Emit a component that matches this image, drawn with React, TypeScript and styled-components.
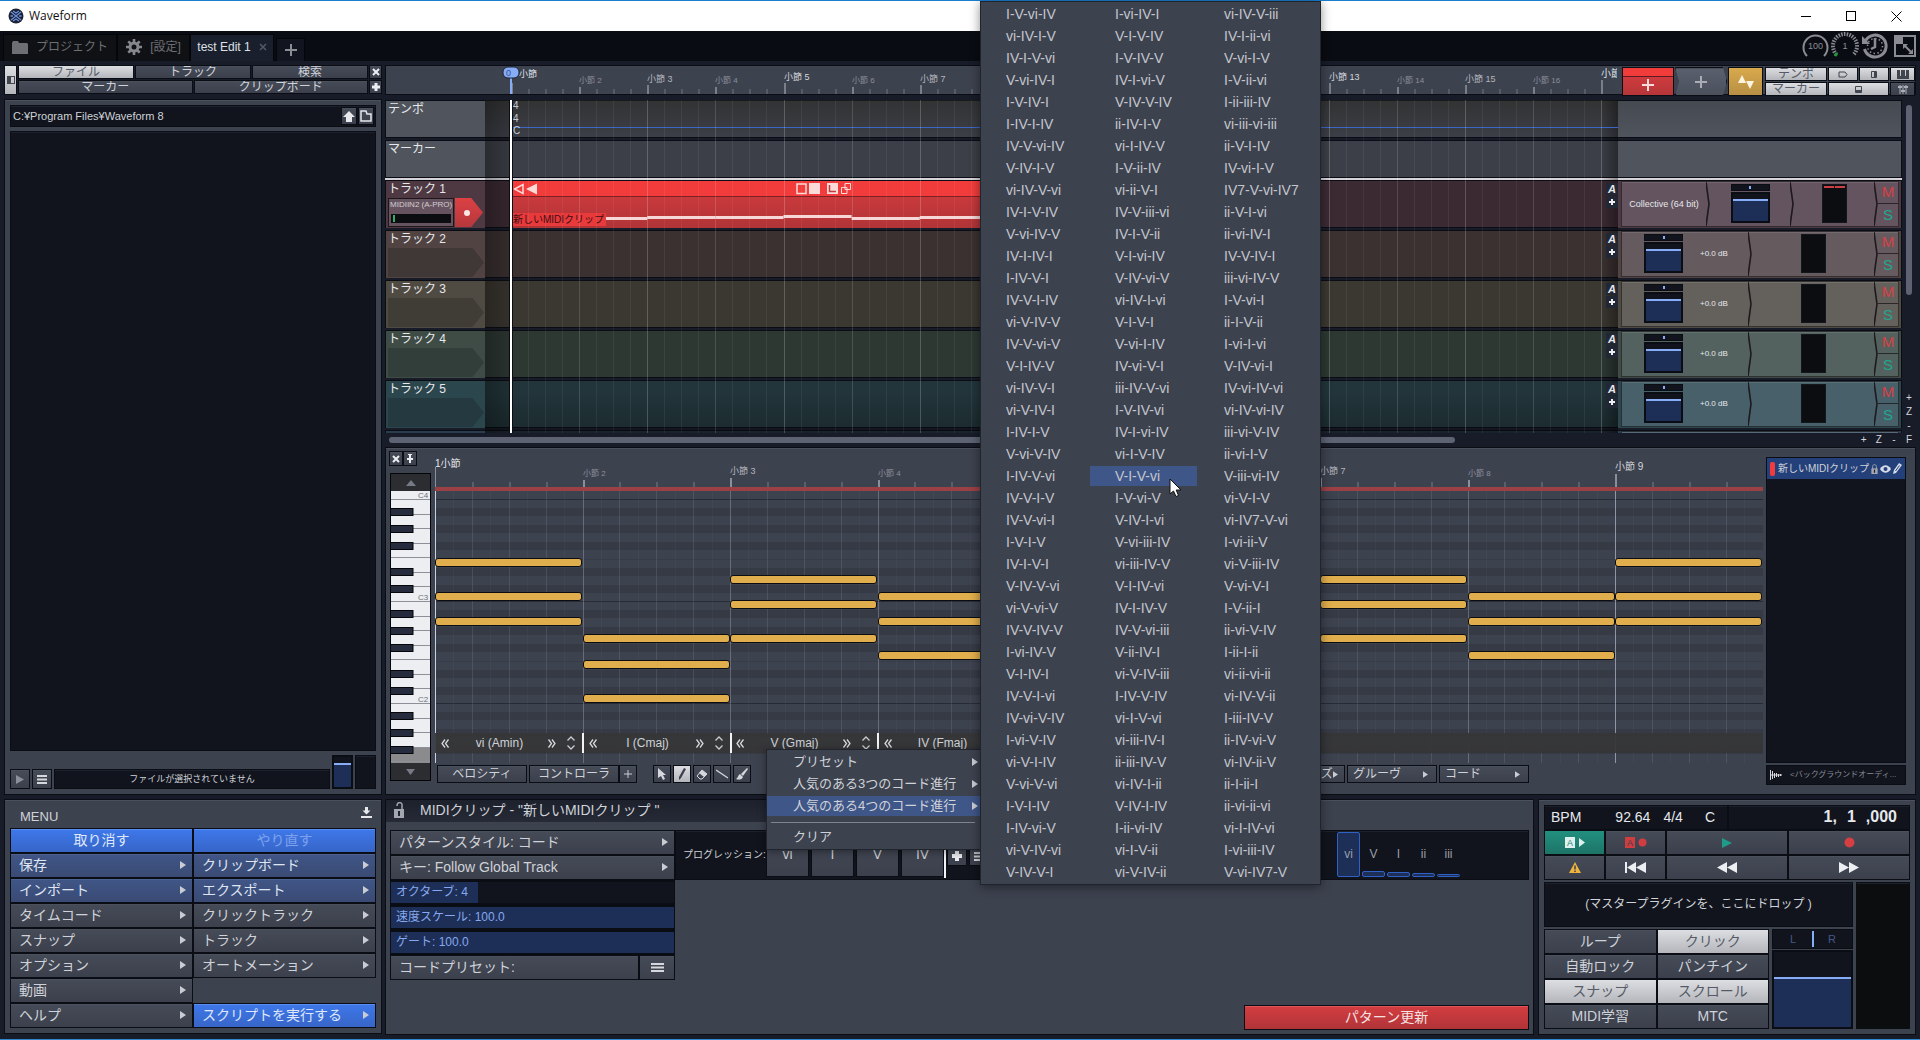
import React from "react";
import styled, { createGlobalStyle, css } from "styled-components";

/* ---------- tokens ---------- */
const c = {
  navy: "#181c28",
  black: "#0a0c13",
  well: "#11141c",
  panel: "#3d424f",
  line: "#0b0d14",
  hi: "#4b505d",
  text: "#cfd2d8",
  bright: "#e6e8ec",
  dim: "#868a95",
  blue: "#3c72e0",
  fill: "#1d2f57",
  level: "#87adf7",
  red: "#f23c3c",
  amber: "#e0ae4c",
};

const GlobalStyle = createGlobalStyle`
  *, *::before, *::after { box-sizing: border-box; }
  html, body, #root { height: 100%; }
  body {
    margin: 0;
    overflow: hidden;
    background: ${c.navy};
    color: ${c.text};
    font: 12px/16px "Liberation Sans", "Noto Sans CJK JP", sans-serif;
  }
  button, input { font: inherit; color: inherit; margin: 0; }
  button { border: 0; background: none; padding: 0; cursor: default; white-space: nowrap; }
  svg { display: block; flex: none; }
`;

/* ---------- shared parts ---------- */
const raised = css`
  border: 1px solid ${c.line};
  background: linear-gradient(#464b58, #3b404c);
  box-shadow: inset 0 1px 0 ${c.hi};
`;

const Panel = styled.section`
  background: ${c.panel};
  border: 1px solid ${c.line};
  box-shadow: inset 0 1px 0 ${c.hi};
  min-width: 0;
`;

const Well = styled.div`
  background: ${c.well};
  border: 1px solid ${c.line};
  box-shadow: inset 0 1px 0 #1c202a;
`;

type Tone = "plain" | "light" | "blue" | "steel" | "red" | "green";
const tones: Record<Tone, ReturnType<typeof css>> = {
  plain: css``,
  light: css`
    background: linear-gradient(#dcdee2, #b4b6bb);
    box-shadow: none;
    color: #555a66;
  `,
  blue: css`
    background: linear-gradient(#3e78ea, #3765c8);
    box-shadow: inset 0 1px 0 #5b8cf0;
    color: #dfe8fb;
  `,
  steel: css`
    background: linear-gradient(#405687, #3a4a74);
    box-shadow: inset 0 1px 0 #4d6293;
    color: #dfe5f2;
  `,
  red: css`
    background: linear-gradient(#d43d41, #b03438);
    box-shadow: inset 0 1px 0 #dd5558;
    color: #f4e2e2;
  `,
  green: css`
    background: linear-gradient(#22907f, #1d7467);
    box-shadow: none;
    color: #e2f2ef;
  `,
};

const Button = styled.button<{ $tone?: Tone; $size?: number; $left?: boolean }>`
  ${raised}
  display: flex;
  align-items: center;
  justify-content: ${(p) => (p.$left ? "space-between" : "center")};
  padding: ${(p) => (p.$left ? "0 6px 0 8px" : "0")};
  padding-bottom: ${(p) => (p.$size === 14 ? 2 : 0)}px;
  font-size: ${(p) => p.$size ?? 12}px;
  line-height: 1;
  color: ${c.text};
  overflow: hidden;
  min-width: 0;
  ${(p) => tones[p.$tone ?? "plain"]}
`;

const Arrow = ({ size = 8 }: { size?: number }) => (
  <svg width={size - 2} height={size} viewBox="0 0 6 8">
    <path d="M0 0L6 4L0 8Z" fill="#c9ccd3" />
  </svg>
);
const Bars = ({ w = 10 }: { w?: number }) => (
  <svg width={w} height="9" viewBox="0 0 10 9" preserveAspectRatio="none">
    <path d="M0 1H10M0 4.5H10M0 8H10" stroke="#d5d7dc" strokeWidth="1.8" />
  </svg>
);
const Cross = () => (
  <svg width="8" height="8" viewBox="0 0 8 8">
    <path d="M1 1L7 7M7 1L1 7" stroke="#eceef2" strokeWidth="2" />
  </svg>
);
const Plus = ({ size = 8, thick = 3, color = "#eceef2" }: { size?: number; thick?: number; color?: string }) => (
  <svg width={size} height={size} viewBox={`0 0 ${size} ${size}`}>
    <path d={`M0 ${size / 2}H${size}M${size / 2} 0V${size}`} stroke={color} strokeWidth={thick} />
  </svg>
);

/* ---------- window chrome ---------- */
const Window = styled.div`
  height: 100vh;
  display: flex;
  flex-direction: column;
  border-bottom: 1px solid #2f87d0;
  position: relative;
`;
const TitleBar = styled.header`
  height: 31px;
  flex: none;
  display: flex;
  align-items: center;
  gap: 5px;
  padding: 0 18px 0 8px;
  background: #fff;
  border-top: 1px solid #1b7fd0;
  color: #111;
  font: 12px/16px "Open Sans", sans-serif;
`;
const WindowButtons = styled.div`
  margin-left: auto;
  display: flex;
  gap: 34px;
`;
const TabBar = styled.nav`
  height: 30px;
  flex: none;
  display: flex;
  align-items: flex-end;
  padding: 0 3px;
  background: ${c.black};
`;
const Tab = styled.button<{ $active?: boolean; $w: number }>`
  width: ${(p) => p.$w}px;
  height: 27px;
  display: flex;
  align-items: center;
  justify-content: center;
  gap: 8px;
  padding-bottom: 2px;
  border: 1px solid #050609;
  border-bottom: 0;
  background: ${(p) => (p.$active ? "#1a1f2d" : "#101114")};
  color: ${(p) => (p.$active ? "#dfe1e6" : "#6d6f74")};
  line-height: 1;
`;
const AddTab = styled(Tab)`
  height: 23px;
  margin-left: 2px;
  padding: 0;
  background: #12151f;
`;
const TabTools = styled.div`
  margin-left: auto;
  align-self: center;
  display: flex;
  align-items: center;
  gap: 2px;
`;
const Main = styled.main`
  flex: 1;
  min-height: 0;
  display: grid;
  grid-template-columns: 378px minmax(0, 1fr);
  gap: 3px;
  padding: 4px 4px 5px;
`;
const Column = styled.div`
  display: flex;
  flex-direction: column;
  gap: 4px;
  min-width: 0;
  min-height: 0;
`;

/* ---------- browser ---------- */
const BrowserTabs = styled.div`
  flex: none;
  height: 30px;
  display: grid;
  grid-template-columns: 13px 1fr 13px;
  gap: 1px;
  & > div {
    display: grid;
    grid-template-rows: 14px 14px;
    gap: 1px;
  }
`;
const TabRow = styled.div`
  display: grid;
  grid-auto-flow: column;
  grid-auto-columns: 1fr;
  gap: 1px;
`;
const Browser = styled(Panel)`
  flex: 1;
  min-height: 0;
  display: flex;
  flex-direction: column;
  gap: 4px;
  padding: 5px;
`;
const PathBar = styled(Well)`
  height: 22px;
  flex: none;
  display: flex;
  align-items: center;
  gap: 1px;
  padding-right: 1px;
  button {
    width: 16px;
    height: 18px;
  }
`;
const PathInput = styled.input`
  flex: 1;
  min-width: 0;
  border: 0;
  padding: 0 2px;
  background: transparent;
  font-size: 11px;
  color: ${c.text};
`;
const FileList = styled(Well)`
  flex: 1;
`;
const PreviewRow = styled.div`
  flex: none;
  height: 34px;
  display: flex;
  align-items: flex-end;
  gap: 2px;
  & > button {
    width: 20px;
    height: 20px;
  }
`;
const FileStatus = styled(Well)`
  flex: 1;
  height: 20px;
  display: flex;
  align-items: center;
  justify-content: center;
  font-size: 9px;
`;
const Fader = styled.input<{ $w: number; $h: number; $top: number }>`
  appearance: none;
  writing-mode: vertical-lr;
  direction: rtl;
  width: ${(p) => p.$w}px;
  height: ${(p) => p.$h}px;
  border: 2px solid ${c.line};
  background: linear-gradient(
    ${c.well} 0 ${(p) => p.$top}px,
    ${c.level} ${(p) => p.$top}px ${(p) => p.$top + 2}px,
    ${c.fill} ${(p) => p.$top + 2}px
  );
  &::-webkit-slider-thumb {
    appearance: none;
    width: 1px;
    height: 1px;
  }
`;
const Pan = styled.input<{ $w: number; $h: number; $bar: number }>`
  appearance: none;
  display: block;
  width: ${(p) => p.$w}px;
  height: ${(p) => p.$h}px;
  border: 1px solid ${c.line};
  background: ${c.well};
  &::-webkit-slider-thumb {
    appearance: none;
    width: 2px;
    height: ${(p) => p.$bar}px;
    background: ${c.level};
  }
`;

/* ---------- menu ---------- */
const MenuPanel = styled(Panel)`
  flex: none;
  height: 235px;
  padding: 5px;
  display: flex;
  flex-direction: column;
`;
const MenuHead = styled.div`
  flex: 1;
  display: flex;
  justify-content: space-between;
  padding: 2px 4px 0 10px;
  font-size: 13px;
  line-height: 20px;
  background: ${c.panel};
`;
const MenuGrid = styled.div`
  display: grid;
  grid-template-columns: 1fr 1fr;
  grid-auto-rows: 25px;
`;

/* ---------- arranger ---------- */
const RulerRow = styled.div`
  flex: none;
  height: 30px;
  display: grid;
  grid-template-columns: minmax(0, 1fr) 298px;
  background: ${c.panel};
  border: 1px solid ${c.line};
`;
const Canvas = styled.div`
  position: relative;
  overflow: hidden;
  min-width: 0;
  min-height: 0;
`;
const Layer = styled.svg`
  position: absolute;
  inset: 0;
  width: 100%;
  height: 100%;
`;
const BarLabel = styled.span<{ $size: number; $color: string }>`
  position: absolute;
  font-size: ${(p) => p.$size}px;
  line-height: 12px;
  color: ${(p) => p.$color};
  white-space: nowrap;
`;
const RulerTools = styled.div`
  display: grid;
  grid-template-columns: 52px 52px 35px 1fr;
  gap: 1px;
  padding: 1px 0 1px 5px;
`;
const ToggleGrid = styled.div`
  display: grid;
  grid-template-columns: 62px 30px 30px 1fr;
  grid-template-rows: 1fr 1fr;
  gap: 1px;
  margin-left: 1px;
`;
const WideButton = styled(Button)`
  grid-column: span 2;
`;
const AddTrack = styled(Button)`
  background: linear-gradient(${c.red} 0 8px, #5e1b1f 8px 9px, #cf3a3d 9px, #b53639);
  box-shadow: none;
  padding-top: 7px;
`;
const AddPlugin = styled(Button)`
  background: linear-gradient(#5a606d, #4b505d);
  clip-path: polygon(0 0, 92% 0, 100% 50%, 92% 100%, 0 100%, 8% 50%);
`;
const Automation = styled(Button)`
  background: linear-gradient(#d9a94b, #b78f45);
  box-shadow: none;
`;

const Arrange = styled.div`
  flex: none;
  height: 333px;
  margin-top: 1px;
  display: grid;
  grid-template-columns: minmax(0, 1fr) 14px;
`;
const Tracks = styled.div`
  position: relative;
  overflow: hidden;
  display: flex;
  flex-direction: column;
  gap: 2px;
`;
const Row = styled.div<{ $h: number; $lane: string }>`
  flex: none;
  height: ${(p) => p.$h}px;
  display: grid;
  grid-template-columns: 99px minmax(0, 1fr) 283px;
  border: 1px solid ${c.line};
  background: ${(p) => p.$lane};
`;
const TrackHead = styled.div<{ $bg: string }>`
  background: ${(p) => p.$bg};
  padding: 0 1px 1px 2px;
  display: flex;
  flex-direction: column;
  justify-content: space-between;
  font-size: 12px;
  line-height: 16px;
  color: ${c.bright};
`;
const HeadShape = styled.div`
  height: 29px;
  background: rgba(10, 12, 18, 0.22);
  clip-path: polygon(0 0, 88% 0, 100% 50%, 88% 100%, 0 100%);
`;
const InputRow = styled.div`
  display: flex;
  gap: 1px;
  height: 29px;
`;
const InputBox = styled.div`
  width: 66px;
  border: 1px solid #1d161b;
  background: #65545f;
  padding: 0 1px;
  font-size: 8px;
  line-height: 12px;
  color: #d6ccd1;
  white-space: nowrap;
`;
const InputMeter = styled.div`
  height: 9px;
  margin: 3px 1px 0;
  padding: 1px 2px;
  background: #0c0d10;
  &::before {
    content: "";
    display: block;
    width: 2px;
    height: 7px;
    background: #2fae6c;
  }
`;
const ArmButton = styled.button`
  width: 28px;
  background: linear-gradient(#dc4144, #b5383c);
  clip-path: polygon(0 0, 58% 0, 100% 50%, 58% 100%, 0 100%);
  display: flex;
  align-items: center;
  padding-left: 9px;
`;
const Lane = styled.div`
  position: relative;
  overflow: hidden;
`;
const LaneButtons = styled.div`
  position: absolute;
  right: 0;
  top: 2px;
  display: grid;
  gap: 1px;
  z-index: 3;
  button {
    width: 12px;
    height: 12px;
    display: flex;
    align-items: center;
    justify-content: center;
    background: #222735;
    color: ${c.bright};
    font: italic bold 11px/12px "Liberation Sans", sans-serif;
  }
`;
const Clip = styled.div`
  position: absolute;
  top: 0;
  bottom: 0;
  left: 26px;
  background: linear-gradient(${c.red} 0 15px, #7c2024 15px 16px, #c9393c 16px, #b03437);
`;
const ClipIcons = styled.div`
  display: flex;
  justify-content: space-between;
  padding: 2px 272px 0 2px;
`;
const ClipName = styled.span`
  position: absolute;
  left: 0;
  bottom: 2px;
  padding: 0 2px;
  font-size: 10px;
  line-height: 13px;
  background: #e8393b;
  color: #3f0f14;
  white-space: nowrap;
`;
const GridOverlay = styled.div`
  position: absolute;
  left: 100px;
  right: 284px;
  top: 0;
  bottom: 0;
  pointer-events: none;
  background:
    linear-gradient(90deg, rgba(0, 0, 0, 0.3) 0, rgba(0, 0, 0, 0.12) 25px, transparent 25px),
    linear-gradient(270deg, rgba(0, 0, 0, 0.35) 0, transparent 18px),
    linear-gradient(rgba(40, 38, 32, 0.5), transparent 38px),
    linear-gradient(0deg, rgba(0, 0, 0, 0.22), transparent 40px);
`;
const InsertLine = styled.div`
  height: 2px;
  flex: none;
  margin: -2px 0;
  background: #d6d3d8;
`;
const Strip = styled.div<{ $bg: string; $edge: string }>`
  background: ${(p) => p.$edge};
  padding: 0 2px 1px 3px;
  & > div {
    height: 100%;
    display: flex;
    background: ${(p) => p.$bg};
    border: 1px solid rgba(20, 16, 20, 0.6);
    box-shadow: inset 0 1px 0 rgba(255, 255, 255, 0.1);
  }
`;
const Segment = styled.div<{ $w: number; $lead?: boolean }>`
  width: ${(p) => p.$w}px;
  display: flex;
  align-items: center;
  justify-content: ${(p) => (p.$lead ? "flex-start" : "center")};
  gap: 17px;
  padding-left: ${(p) => (p.$lead ? 22 : 0)}px;
  padding-bottom: 1px;
  white-space: nowrap;
  font-size: ${(p) => (p.$lead ? 8 : 9)}px;
  color: ${c.bright};
`;
const FaderStack = styled.div`
  display: grid;
  gap: 1px;
`;
const Meter = styled.div<{ $peak?: boolean }>`
  width: 25px;
  height: 39px;
  border: 1px solid #14161d;
  background: #0c0d10;
  padding: 1px;
  display: flex;
  gap: 1px;
  &::before,
  &::after {
    content: "";
    flex: 1;
    height: 2px;
    background: ${(p) => (p.$peak ? "#cf3f43" : "transparent")};
  }
`;
const MuteSolo = styled.div`
  flex: 1;
  display: grid;
  grid-template-rows: 1fr 1fr;
  button {
    font-size: 15px;
    line-height: 1;
    padding-bottom: 2px;
    color: #dc3e43;
    border-bottom: 1px solid rgba(20, 16, 20, 0.7);
  }
  button + button {
    color: #1fa78f;
    border-bottom: 0;
  }
`;
const VScroll = styled.div`
  display: flex;
  flex-direction: column;
  align-items: center;
  justify-content: space-between;
  padding: 5px 0 1px;
  &::before {
    content: "";
    width: 6px;
    height: 190px;
    border-radius: 3px;
    background: #5d6373;
  }
`;
const ZoomKeys = styled.div<{ $row?: boolean }>`
  display: flex;
  flex-direction: ${(p) => (p.$row ? "row" : "column")};
  gap: ${(p) => (p.$row ? 9 : 2)}px;
  button {
    min-width: 6px;
    font-size: 10px;
    line-height: 12px;
    color: #d5d7dc;
  }
`;
const HScroll = styled.div`
  flex: none;
  height: 14px;
  margin: -4px 0;
  display: flex;
  align-items: center;
  justify-content: space-between;
  padding: 0 4px;
  &::before {
    content: "";
    width: 70%;
    height: 6px;
    border-radius: 3px;
    background: #5d6373;
  }
`;

/* ---------- MIDI editor ---------- */
const Editor = styled(Panel)`
  flex: 1;
  min-height: 0;
  display: grid;
  grid-template-columns: 46px minmax(0, 1fr) 140px;
  padding: 3px 9px 0 3px;
`;
const KeyColumn = styled.div`
  display: flex;
  flex-direction: column;
  padding-bottom: 13px;
  min-height: 0;
`;
const MiniRow = styled.div`
  display: flex;
  flex: none;
  margin-bottom: 7px;
  button {
    width: 14px;
    height: 15px;
  }
`;
const Piano = styled.div`
  flex: 1;
  min-height: 0;
  width: 41px;
  margin-left: 1px;
  border: 1px solid #050609;
  display: flex;
  flex-direction: column;
  background: #2c2d31;
  & > button {
    flex: none;
    height: 17px;
    display: flex;
    align-items: center;
    justify-content: center;
  }
`;
const RollColumn = styled.div`
  display: flex;
  flex-direction: column;
  padding: 0 3px 11px 0;
  min-height: 0;
  min-width: 0;
`;
const RollRuler = styled(Canvas)`
  flex: none;
  height: 40px;
  border-bottom: 4px solid #9b4045;
`;
const Roll = styled(Canvas)`
  flex: 1;
`;
const Note = styled.div`
  position: absolute;
  height: 9px;
  border: 1px solid #0b0d12;
  border-radius: 3px;
  background: ${c.amber};
`;
const ChordStrip = styled.div`
  position: absolute;
  left: 0;
  right: 0;
  bottom: 10px;
  height: 20px;
  background: rgba(54, 54, 56, 0.94);
`;
const Chord = styled.div`
  position: absolute;
  top: 0;
  bottom: 0;
  display: grid;
  grid-template-columns: 20px 1fr 16px 22px;
  align-items: center;
  text-align: center;
  border-right: 2px solid #f2f3f5;
  font-size: 12px;
  button {
    display: flex;
    justify-content: center;
  }
`;
const RollTools = styled.div`
  flex: none;
  height: 18px;
  margin-top: 2px;
  display: flex;
  gap: 2px;
  padding-left: 2px;
`;
const ToolButton = styled(Button)<{ $w: number }>`
  width: ${(p) => p.$w}px;
  flex: none;
  padding: ${(p) => (p.$left ? "0 8px 0 5px" : "0")};
`;
const ToolSet = styled.div`
  display: flex;
  gap: 2px;
  margin: 0 502px 0 14px;
`;
const Joined = styled.div`
  display: flex;
`;
const ClipColumn = styled.div`
  display: flex;
  flex-direction: column;
  gap: 2px;
  padding: 6px 0 9px;
`;
const ClipList = styled(Well)`
  flex: 1;
`;
const ClipItem = styled.div`
  height: 21px;
  display: flex;
  align-items: center;
  gap: 2px;
  padding: 0 3px;
  background: #23407a;
  font-size: 10px;
  white-space: nowrap;
  &::before {
    content: "";
    width: 8px;
    height: 14px;
    margin-right: 1px;
    border-radius: 2px;
    background: ${c.red};
  }
  svg:first-of-type {
    margin-left: auto;
  }
`;
const AudioBox = styled.button`
  height: 20px;
  flex: none;
  border: 1px solid ${c.line};
  background: ${c.well};
  display: flex;
  align-items: center;
  gap: 8px;
  padding: 0 3px;
  font-size: 8px;
  color: ${c.dim};
`;

/* ---------- properties ---------- */
const Bottom = styled.div`
  flex: none;
  height: 235px;
  display: grid;
  grid-template-columns: minmax(0, 1fr) 378px;
  gap: 4px;
`;
const Props = styled(Panel)`
  display: flex;
  flex-direction: column;
`;
const PropsTitle = styled.div`
  width: 600px;
  height: 22px;
  flex: none;
  display: flex;
  align-items: center;
  gap: 16px;
  padding: 0 0 2px 8px;
  background: linear-gradient(#1d212c, #252a36);
  font-size: 14px;
  line-height: 1;
`;
const PropsBody = styled.div`
  flex: 1;
  display: grid;
  grid-template-columns: 285px minmax(0, 1fr);
  padding: 8px 4px 4px;
`;
const PropList = styled.div`
  display: grid;
  grid-auto-rows: 25px;
  align-content: start;
`;
const Slider = styled.div`
  position: relative;
  border: 1px solid ${c.line};
  border-width: 2px 1px;
  background: ${c.well};
  label {
    position: absolute;
    left: 5px;
    top: 0;
    font-size: 12px;
    line-height: 20px;
    color: #86a8ee;
    pointer-events: none;
  }
  input {
    appearance: none;
    display: block;
    width: 100%;
    height: 21px;
    background: transparent;
  }
  input::-webkit-slider-thumb {
    appearance: none;
    width: 1px;
  }
`;
const PresetRow = styled.div`
  display: grid;
  grid-template-columns: 1fr 36px;
`;
const PropsRight = styled.div`
  display: flex;
  flex-direction: column;
  justify-content: space-between;
  align-items: flex-end;
`;
const Progression = styled(Well)`
  width: 100%;
  height: 50px;
  display: flex;
  padding: 1px 0 1px 7px;
  font-size: 10px;
`;
const ProgLabel = styled.span`
  width: 83px;
  align-self: center;
  white-space: nowrap;
`;
const ChordBoxes = styled.div`
  display: flex;
  gap: 2px;
  border-right: 2px solid #f2f3f5;
  button {
    width: 43px;
    height: 45px;
  }
`;
const ProgTools = styled.div`
  display: flex;
  gap: 2px;
  padding: 14px 0 0 1px;
  button {
    width: 20px;
    height: 20px;
  }
`;
const Suggest = styled.div`
  display: grid;
  grid-template-columns: repeat(5, 23px);
  gap: 2px;
  margin: 0 68px 0 auto;
`;
const SuggestItem = styled.button`
  position: relative;
  height: 45px;
  display: flex;
  align-items: flex-end;
  span {
    position: absolute;
    left: 0;
    right: 0;
    top: 14px;
    font-size: 12px;
    color: #9a9eab;
  }
  i {
    flex: 1;
    border: 1px solid #2f62c4;
    border-radius: 2px;
    background: ${c.fill};
  }
`;
const Update = styled(Button)`
  width: 285px;
  height: 25px;
`;

/* ---------- transport ---------- */
const Transport = styled(Panel)`
  display: grid;
  grid-template-rows: 25px 50px 1fr;
  padding: 5px;
`;
const Lcd = styled.div`
  display: grid;
  grid-template-columns: 184px 1fr;
  & > div {
    display: flex;
    align-items: center;
    font-size: 14px;
    line-height: 1;
    color: ${c.bright};
    padding: 0 12px 1px 6px;
  }
`;
const Tempo = styled(Well)`
  gap: 13px;
  span:first-child {
    flex: 1;
  }
  span:last-child {
    margin-left: 9px;
  }
`;
const Clock = styled(Well)`
  justify-content: flex-end;
  gap: 10px;
  font-weight: bold;
  span {
    font-size: 16px;
  }
`;
const Keys = styled.div`
  display: grid;
  grid-template-columns: 61px 61px 1fr 1fr;
  grid-template-rows: 25px 25px;
  button {
    gap: 4px;
  }
`;
const MasterArea = styled.div`
  display: grid;
  grid-template-columns: 225px 81px 1fr;
  grid-template-rows: 45px 100px;
  column-gap: 3px;
  row-gap: 2px;
  padding-top: 2px;
`;
const MasterDrop = styled(Well)`
  grid-column: span 2;
  display: flex;
  align-items: center;
  justify-content: center;
  padding-bottom: 2px;
  font-size: 12px;
  color: ${c.text};
`;
const MasterMeter = styled(Well)`
  grid-row: span 2;
  background: #0c0d0f;
`;
const ModeGrid = styled.div`
  display: grid;
  grid-template-columns: 1fr 1fr;
  grid-auto-rows: 25px;
`;
const MasterFaders = styled.div`
  display: grid;
  grid-template-rows: 20px 79px;
  gap: 1px;
`;
const PanBox = styled.div`
  position: relative;
  span {
    position: absolute;
    top: 2px;
    left: 18px;
    font-size: 11px;
    line-height: 16px;
    color: #44588a;
  }
  span + span {
    left: auto;
    right: 17px;
  }
`;

/* ---------- floating menus ---------- */
const ContextMenu = styled.div`
  position: absolute;
  left: 766px;
  top: 749px;
  width: 216px;
  padding: 2px 0;
  border: 1px solid #20242d;
  background: ${c.panel};
  box-shadow: 0 2px 8px rgba(0, 0, 0, 0.4);
  display: grid;
  gap: 2px;
  z-index: 10;
  hr {
    width: 204px;
    height: 1px;
    margin: 4px 4px 2px;
    border: 0;
    background: #80848e;
  }
`;
const ContextItem = styled.button<{ $on?: boolean }>`
  height: 20px;
  display: flex;
  align-items: center;
  justify-content: space-between;
  padding: 0 3px 1px 26px;
  font-size: 13px;
  line-height: 1;
  color: ${c.text};
  background: ${(p) => (p.$on ? "#3f5688" : "transparent")};
`;
const ChordMenu = styled.div`
  position: absolute;
  left: 980px;
  top: 1px;
  width: 341px;
  display: grid;
  grid-template-columns: repeat(3, 107px);
  grid-template-rows: repeat(40, 20px);
  grid-auto-flow: column;
  gap: 2px;
  padding: 2px 0;
  border: 1px solid #20242d;
  background: ${c.panel};
  box-shadow: 0 2px 10px rgba(0, 0, 0, 0.45);
  z-index: 11;
`;
const ChordItem = styled.button<{ $on?: boolean }>`
  padding: 0 0 1px 25px;
  text-align: left;
  font-size: 14px;
  line-height: 18px;
  color: #c4c7ce;
  background: ${(p) => (p.$on ? "#3f5688" : "transparent")};
`;
const Pointer = styled.svg`
  position: absolute;
  left: 1169px;
  top: 478px;
  z-index: 12;
`;

/* ---------- data ---------- */
const progressions = [
  "I-V-vi-IV vi-IV-I-V IV-I-V-vi V-vi-IV-I I-V-IV-I I-IV-I-IV IV-V-vi-IV V-IV-I-V vi-IV-V-vi IV-I-V-IV V-vi-IV-V IV-I-IV-I I-IV-V-I IV-V-I-IV vi-V-IV-V IV-V-vi-V V-I-IV-V vi-IV-V-I vi-V-IV-I I-IV-I-V V-vi-V-IV I-IV-V-vi IV-V-I-V IV-V-vi-I I-V-I-V IV-I-V-I V-IV-V-vi vi-V-vi-V IV-V-IV-V I-vi-IV-V V-I-IV-I IV-V-I-vi IV-vi-V-IV I-vi-V-IV vi-V-I-IV V-vi-V-vi I-V-I-IV I-IV-vi-V vi-V-IV-vi V-IV-V-I",
  "I-vi-IV-I V-I-V-IV I-V-IV-V IV-I-vi-V V-IV-V-IV ii-IV-I-V vi-I-IV-V I-V-ii-IV vi-ii-V-I IV-V-iii-vi IV-I-V-ii V-I-vi-IV V-IV-vi-V vi-IV-I-vi V-I-V-I V-vi-I-IV IV-vi-V-I iii-IV-V-vi I-V-IV-vi IV-I-vi-IV vi-I-V-IV V-I-V-vi I-V-vi-V V-IV-I-vi V-vi-iii-IV vi-iii-IV-V V-I-IV-vi IV-I-IV-V IV-V-vi-iii V-ii-IV-I vi-V-IV-iii I-IV-V-IV vi-I-V-vi vi-iii-IV-I ii-iii-IV-V vi-IV-I-ii V-IV-I-IV I-ii-vi-IV vi-I-V-ii vi-V-IV-ii",
  "vi-IV-V-iii IV-I-ii-vi V-vi-I-V I-V-ii-vi I-ii-iii-IV vi-iii-vi-iii ii-V-I-IV IV-vi-I-V IV7-V-vi-IV7 ii-V-I-vi ii-vi-IV-I IV-V-IV-I iii-vi-IV-V I-V-vi-I ii-I-V-ii I-vi-I-vi V-IV-vi-I IV-vi-IV-vi vi-IV-vi-IV iii-vi-V-IV ii-vi-I-V V-iii-vi-IV vi-V-I-V vi-IV7-V-vi I-vi-ii-V vi-V-iii-IV V-vi-V-I I-V-ii-I ii-vi-V-IV I-ii-I-ii vi-ii-vi-ii vi-IV-V-ii I-iii-IV-V ii-IV-vi-V vi-IV-ii-V ii-I-ii-I ii-vi-ii-vi vi-I-IV-vi I-vi-iii-IV V-vi-IV7-V",
].flatMap((s) => s.split(" "));

const menuItems: { label: string; tone: Tone; arrow?: boolean }[] = [
  { label: "取り消す", tone: "blue" },
  { label: "やり直す", tone: "blue" },
  { label: "保存", tone: "steel", arrow: true },
  { label: "クリップボード", tone: "steel", arrow: true },
  { label: "インポート", tone: "steel", arrow: true },
  { label: "エクスポート", tone: "steel", arrow: true },
  { label: "タイムコード", tone: "plain", arrow: true },
  { label: "クリックトラック", tone: "plain", arrow: true },
  { label: "スナップ", tone: "plain", arrow: true },
  { label: "トラック", tone: "plain", arrow: true },
  { label: "オプション", tone: "plain", arrow: true },
  { label: "オートメーション", tone: "plain", arrow: true },
  { label: "動画", tone: "plain", arrow: true },
  { label: "", tone: "plain" },
  { label: "ヘルプ", tone: "plain", arrow: true },
  { label: "スクリプトを実行する", tone: "blue", arrow: true },
];

const tracks = [
  { n: 1, head: "#4e3943", lane: "#3b2a32", strip: "#63545f" },
  { n: 2, head: "#504342", lane: "#3b3131", strip: "#655b5f" },
  { n: 3, head: "#504b42", lane: "#3b3731", strip: "#64615d" },
  { n: 4, head: "#3e4c45", lane: "#2d3833", strip: "#53625e" },
  { n: 5, head: "#2c464d", lane: "#22353a", strip: "#48606a" },
];

const BAR = 1090 / 16;
const BAR_START = 125;
const ROLL_BAR = 295 / 2;
const SEMI = 17 / 2;

const arrangeLabel = (n: number) => {
  if (n === 17) return { text: "小節", size: 10, color: "#dfe1e6", top: 2, tick: 14 };
  if (n % 4 === 1) return { text: `小節 ${n}`, size: 9, color: "#d3d6dc", top: 5, tick: 11 };
  if (n % 2 === 1) return { text: `小節 ${n}`, size: 9, color: "#b2b5bd", top: 7, tick: 9 };
  return { text: `小節 ${n}`, size: 8, color: "#8b8f9a", top: 9, tick: 7 };
};
const rollLabel = (n: number) => {
  if (n === 1) return { text: "1小節", size: 10, color: "#e6e8ec", top: 7, tick: 20 };
  if (n === 9) return { text: `小節 ${n}`, size: 10, color: "#d5d7dc", top: 10, tick: 13 };
  if (n === 5) return { text: `小節 ${n}`, size: 10, color: "#d5d7dc", top: 11, tick: 11 };
  if (n % 2 === 1) return { text: `小節 ${n}`, size: 9, color: "#b2b5bd", top: 14, tick: 9 };
  return { text: `小節 ${n}`, size: 8, color: "#8b8f9a", top: 17, tick: 7 };
};
const range = (n: number) => Array.from({ length: n }, (_, i) => i);

/* Semitone rows counted down from the C4 row. */
const chordNotes = [
  [8, 12, 15],
  [17, 20, 24],
  [10, 13, 17],
  [12, 15, 19],
  [8, 12, 15],
  [17, 20, 24],
  [10, 13, 17],
  [12, 15, 19],
  [8, 12, 15],
];
const chordNames = ["vi (Amin)", "I (Cmaj)", "V (Gmaj)", "IV (Fmaj)"];
const blackRows = [2, 4, 6, 9, 11];

/* ---------- pieces ---------- */
const ArrangeRuler = () => (
  <Canvas>
    <Layer>
      {range(16 * 4 + 1).map((i) => {
        const h = i % 4 === 0 ? arrangeLabel(i / 4 + 1).tick : 5;
        return (
          <rect key={i} x={Math.round(BAR_START + (i * BAR) / 4)} y={28 - h} width="2" height={h} fill={i % 4 === 0 ? "#7b7f8a" : "#565b68"} />
        );
      })}
      <rect x="124" y="10" width="2" height="18" fill={c.level} />
      <rect x="117" y="1" width="16" height="11" rx="5" fill={c.level} stroke="#1d2436" />
    </Layer>
    <BarLabel $size={9} $color="#35518f" style={{ left: 120, top: 1 }}>0</BarLabel>
    <BarLabel $size={9} $color="#dfe1e6" style={{ left: BAR_START + 8, top: 2 }}>小節</BarLabel>
    {range(16).map((i) => {
      const l = arrangeLabel(i + 2);
      return (
        <BarLabel key={i} $size={l.size} $color={l.color} style={{ left: Math.round(BAR_START + (i + 1) * BAR), top: l.top }}>
          {l.text}
        </BarLabel>
      );
    })}
  </Canvas>
);

const Toggles = () => (
  <ToggleGrid>
    <Button $tone="light">テンポ</Button>
    <Button $tone="light" aria-label="クリップ表示">
      <svg width="10" height="7" viewBox="0 0 10 7"><path d="M1 1H7L9 3.5L7 6H1Z" fill="none" stroke="#40454f" /></svg>
    </Button>
    <Button $tone="light" aria-label="右パネル">
      <svg width="6" height="7" viewBox="0 0 6 7"><path d="M.5.5H5.5V6.5H.5Z" fill="none" stroke="#40454f" /><path d="M3 1H6V6H3Z" fill="#40454f" /></svg>
    </Button>
    <Button $tone="light" aria-label="鍵盤">
      <svg width="12" height="9" viewBox="0 0 12 9"><path d="M0 0H3V6H4V0H8V6H9V0H12V9H0Z" fill="#40454f" /></svg>
    </Button>
    <Button $tone="light">マーカー</Button>
    <WideButton $tone="light" aria-label="下パネル">
      <svg width="7" height="7" viewBox="0 0 7 7"><path d="M.5.5H6.5V6.5H.5Z" fill="none" stroke="#40454f" /><path d="M1 4H6V6H1Z" fill="#40454f" /></svg>
    </WideButton>
    <Button aria-label="ミキサー">
      <svg width="10" height="9" viewBox="0 0 10 9"><path d="M2 0V9M5 0V9M8 0V9" stroke="#a9adb6" /><path d="M0 2H4M3 6H7M6 2H10" stroke="#a9adb6" strokeWidth="2" /></svg>
    </Button>
  </ToggleGrid>
);

const Chevron = () => (
  <svg width="4" height="100%" viewBox="0 0 4 44" preserveAspectRatio="none">
    <path d="M0 0L3 22L0 44" fill="none" stroke="#1d191d" strokeWidth="1.6" />
  </svg>
);

const TrackFader = ({ n }: { n: number }) => (
  <FaderStack>
    <Pan type="range" aria-label={`トラック ${n} パン`} $w={39} $h={7} $bar={3} />
    <Fader type="range" aria-label={`トラック ${n} 音量`} $w={39} $h={31} $top={5} />
  </FaderStack>
);

const MidiClip = () => (
  <Clip style={{ width: BAR * 9 }}>
    <Layer>
      {range(9).map((i) => (
        <rect key={i} x={i * BAR} y={i % 4 === 1 || i === 0 ? 36 : 35 - (i % 4 === 0 ? 1 : 0)} width={BAR} height="3" fill="#f6d6d6" />
      ))}
    </Layer>
    <ClipIcons>
      <svg width="24" height="12" viewBox="0 0 24 12">
        <path d="M10 1.5V10.5L1.5 6Z" fill="none" stroke="#fbdada" strokeWidth="1.5" />
        <path d="M24 .5V11.5L13 6Z" fill="#fbdada" />
      </svg>
      <svg width="56" height="12" viewBox="0 0 56 12">
        <rect x="1" y="1" width="9" height="9.500" fill="none" stroke="#fbdada" strokeWidth="1.5" />
        <rect x="13" y="0" width="11" height="11" fill="#fbdada" />
        <rect x="31" y="0" width="11" height="11" fill="#fbdada" />
        <path d="M33.500 2V8.500H40" fill="none" stroke="#c03a3d" strokeWidth="1.500" />
        <path d="M49 .5H54.500V6.500H49ZM45.500 4.500H51V10.500H45.500Z" fill="none" stroke="#fbdada" />
      </svg>
    </ClipIcons>
    <ClipName>新しいMIDIクリップ</ClipName>
  </Clip>
);

const TrackRow = ({ t }: { t: (typeof tracks)[number] }) => (
  <Row $h={48} $lane={t.lane}>
    <TrackHead $bg={t.head}>
      {`トラック ${t.n}`}
      {t.n === 1 ? (
        <InputRow>
          <InputBox>
            MIDIIN2 (A-PRO)
            <InputMeter />
          </InputBox>
          <ArmButton aria-label="録音待機">
            <svg width="6" height="6"><circle cx="3" cy="3" r="3" fill="#fbe6e6" /></svg>
          </ArmButton>
        </InputRow>
      ) : (
        <HeadShape />
      )}
    </TrackHead>
    <Lane>
      {t.n === 1 && <MidiClip />}
      <LaneButtons>
        <button aria-label="オートメーション">A</button>
        <button aria-label="プラグイン追加"><Plus size={6} thick={2} /></button>
      </LaneButtons>
    </Lane>
    <Strip $bg={t.strip} $edge={t.head}>
      <div>
        {t.n === 1 ? (
          <>
            <Segment $w={84}>Collective (64 bit)</Segment>
            <Chevron />
            <Segment $w={80}><TrackFader n={1} /></Segment>
            <Chevron />
            <Segment $w={80}><Meter $peak /></Segment>
          </>
        ) : (
          <>
            <Segment $w={126} $lead><TrackFader n={t.n} />+0.0 dB</Segment>
            <Chevron />
            <Segment $w={122}><Meter /></Segment>
          </>
        )}
        <Chevron />
        <MuteSolo>
          <button>M</button>
          <button>S</button>
        </MuteSolo>
      </div>
    </Strip>
  </Row>
);

const ArrangeGrid = () => (
  <GridOverlay>
    <Layer>
      <path d="M26 27.500H1133" stroke="#3d66c4" />
      {range(16 * 4 + 1).map((i) => (
        <rect key={i} x={Math.round(26 + (i * BAR) / 4)} y="0" width="1" height="333" fill="#fff" opacity={i % 4 === 0 ? (i % 8 === 0 ? 0.2 : 0.14) : 0.06} />
      ))}
      <rect x="24" y="-2" width="4" height="340" fill="#0b0d12" />
      <rect x="25" y="-2" width="2" height="340" fill="#fff" />
    </Layer>
    <BarLabel $size={10} $color="#c9ccd3" style={{ left: 28, top: 0 }}>4</BarLabel>
    <BarLabel $size={10} $color="#c9ccd3" style={{ left: 28, top: 13 }}>4</BarLabel>
    <BarLabel $size={10} $color="#c9ccd3" style={{ left: 28, top: 25 }}>C</BarLabel>
  </GridOverlay>
);

const PianoKeys = () => (
  <svg width="39" height="100%" style={{ flex: "1 1 0", minHeight: 0 }}>
    <rect width="39" height="300" fill="#eceef1" />
    <rect y="256" width="39" height="40" fill="#8b8b8d" />
    {range(19).map((i) => (
      <rect key={i} x="0" y={Math.round(8 + (i * SEMI * 12) / 7)} width="39" height="1" fill="#8d9098" />
    ))}
    {range(3).flatMap((o) =>
      blackRows.map((r) => (
        <rect key={`${o}-${r}`} x="-1" y={Math.round((o * 12 + r) * SEMI) + 0.5} width="23" height="7" fill="#262b3d" stroke="#050609" />
      ))
    )}
    {["C4", "C3", "C2"].map((k, i) => (
      <text key={k} x="27" y={7 + i * 102} fontSize="8" fill="#6d7078">{k}</text>
    ))}
  </svg>
);

const PianoRoll = () => (
  <Roll>
    <Layer>
      {range(3).flatMap((o) =>
        blackRows.map((r) => (
          <rect key={`${o}-${r}`} x="0" y={Math.round((o * 12 + r) * SEMI)} width="100%" height="8" fill="#363a45" />
        ))
      )}
      {range(3).map((o) => (
        <g key={o}>
          <rect x="0" y={8 + o * 102} width="100%" height="1" fill="#272b36" />
          <rect x="0" y={68 + o * 102} width="100%" height="1" fill="#383c48" />
        </g>
      ))}
      {range(73).map((i) => (
        <rect key={i} x={Math.round((i * ROLL_BAR) / 8)} y="0" width="1" height="100%" fill="#c8d0e4" opacity={i === 0 ? 1 : i === 64 ? 0.6 : i % 8 === 0 ? 0.3 : i % 2 === 0 ? 0.13 : 0.04} />
      ))}
    </Layer>
    {chordNotes.flatMap((notes, bar) =>
      notes.map((n) => (
        <Note key={`${bar}-${n}`} style={{ left: Math.round(bar * ROLL_BAR), width: Math.round(ROLL_BAR) - 1, top: Math.floor(n * SEMI) - 1 }} />
      ))
    )}
    <ChordStrip>
      {chordNames.map((name, i) => (
        <Chord key={name} style={{ left: Math.round(i * ROLL_BAR), width: Math.round(ROLL_BAR) + 1 }}>
          <button aria-label="前のコード">
            <svg width="8" height="9" viewBox="0 0 8 9"><path d="M4 .5L1 4.500L4 8.500M7.500 .5L4.500 4.500L7.500 8.500" fill="none" stroke="#d5d7dc" strokeWidth="1.300" /></svg>
          </button>
          <span>{name}</span>
          <button aria-label="次のコード">
            <svg width="8" height="9" viewBox="0 0 8 9"><path d="M.5 .5L3.500 4.500L.5 8.500M4 .5L7 4.500L4 8.500" fill="none" stroke="#d5d7dc" strokeWidth="1.300" /></svg>
          </button>
          <button aria-label="転回">
            <svg width="8" height="14" viewBox="0 0 8 14"><path d="M.5 4.500L4 1L7.500 4.500M.5 9.500L4 13L7.500 9.500" fill="none" stroke="#c9ccd3" strokeWidth="1.300" /></svg>
          </button>
        </Chord>
      ))}
    </ChordStrip>
  </Roll>
);

const Lock = ({ open, w = 8, h = 11 }: { open?: boolean; w?: number; h?: number }) => (
  <svg width={w} height={h} viewBox="0 0 10 16">
    <path d={open ? "M3 4C3 -1 9 0 8 4V8" : "M2 8V4C2 0 8 0 8 4V8"} fill="none" stroke="#a4a7af" strokeWidth="1.500" />
    <rect x="0" y="7" width="10" height="9" fill="#a4a7af" />
    <rect x="4" y="9" width="2" height="5" fill="#20242f" />
  </svg>
);

const Value = ({ id, label, value, max }: { id: string; label: string; value: number; max: number }) => {
  const pct = (value / max) * 100;
  return (
    <Slider style={{ background: `linear-gradient(90deg, ${c.fill} ${pct}%, ${c.well} ${pct}%)` }}>
      <input id={id} type="range" min={0} max={max} defaultValue={value} />
      <label htmlFor={id}>{label}</label>
    </Slider>
  );
};

/* ---------- page ---------- */
export default function App() {
  return (
    <>
      <GlobalStyle />
      <Window>
        <TitleBar>
          <svg width="16" height="16" viewBox="0 0 16 16">
            <circle cx="8" cy="8" r="7.500" fill="#1c2233" />
            <path d="M3 4L8 8L13 4M3 12L8 8L13 12M5 3L8 5L11 3M5 13L8 11L11 13M2.500 8H5M11 8H13.500" fill="none" stroke="#6b8fdd" strokeWidth="1.300" />
          </svg>
          Waveform
          <WindowButtons>
            <button aria-label="最小化"><svg width="11" height="11"><path d="M0 5.500H10" stroke="#000" /></svg></button>
            <button aria-label="最大化"><svg width="11" height="11"><rect x=".5" y=".5" width="9" height="9" fill="none" stroke="#000" /></svg></button>
            <button aria-label="閉じる"><svg width="11" height="11"><path d="M.5 .5L10.500 10.500M10.500 .5L.5 10.500" stroke="#000" /></svg></button>
          </WindowButtons>
        </TitleBar>

        <TabBar>
          <Tab $w={114}>
            <svg width="16" height="13" viewBox="0 0 16 13"><path d="M0 2L1 0H6L7 2H15L16 3V13H0Z" fill="#6d6f74" /></svg>
            プロジェクト
          </Tab>
          <Tab $w={73}>
            <svg width="16" height="16" viewBox="0 0 16 16">
              <circle cx="8" cy="8" r="4" fill="none" stroke="#85878c" strokeWidth="3" />
              <path d="M8 0V3M8 13V16M0 8H3M13 8H16M2.300 2.300L4.500 4.500M11.500 11.500L13.700 13.700M13.700 2.300L11.500 4.500M4.500 11.500L2.300 13.700" stroke="#85878c" strokeWidth="2.600" />
            </svg>
            [設定]
          </Tab>
          <Tab $w={84} $active>
            test Edit 1
            <svg width="8" height="8"><path d="M1 1L7 7M7 1L1 7" stroke="#555965" strokeWidth="1.500" /></svg>
          </Tab>
          <AddTab $w={29} aria-label="新規タブ"><Plus size={12} thick={2} color="#8b8d93" /></AddTab>
          <TabTools>
            <svg width="27" height="28" viewBox="0 0 27 28">
              <path d="M5 24A12 12 0 1 1 22 24" fill="none" stroke="#8a8c91" strokeWidth="2" />
              <text x="13.500" y="17" fontSize="9" textAnchor="middle" fill="#8a8c91">100</text>
            </svg>
            <svg width="28" height="28" viewBox="0 0 28 28">
              <path d="M5.500 22.500A12 12 0 1 1 22.500 22.500" fill="none" stroke="#8a8c91" strokeWidth="4" strokeDasharray="1.500 1.200" />
              <path d="M4 24L6 21" stroke="#1f9a3d" strokeWidth="3" />
              <text x="14" y="17" fontSize="9" textAnchor="middle" fill="#8a8c91">1</text>
            </svg>
            <svg width="28" height="28" viewBox="0 0 28 28">
              <path d="M4.600 8.500A11 11 0 1 1 3.500 17" fill="none" stroke="#8a8c91" strokeWidth="3" />
              <path d="M1 4V12H9Z" fill="#8a8c91" />
              <circle cx="14" cy="14" r="7.500" fill="none" stroke="#8a8c91" strokeWidth="1.500" strokeDasharray="1.500 2.400" />
              <path d="M14 6V15L10 17" fill="none" stroke="#8a8c91" strokeWidth="2.500" />
            </svg>
            <svg width="26" height="22" viewBox="0 0 26 22">
              <rect x="4" y="1" width="20" height="20" fill="none" stroke="#8a8c91" strokeWidth="2" />
              <rect x="4" y="1" width="8" height="8" fill="#8a8c91" />
              <path d="M13 10L21 18" stroke="#8a8c91" strokeWidth="2" />
              <path d="M12 9H17L12 14ZM22 19V14L17 19Z" fill="#8a8c91" />
            </svg>
          </TabTools>
        </TabBar>

        <Main>
          <Column>
            <BrowserTabs>
              <Button $tone="light" aria-label="ブラウザーの表示切替">
                <svg width="8" height="8"><rect x=".5" y=".5" width="7" height="7" fill="none" stroke="#40454f" /><rect x="1" y="1" width="3" height="6" fill="#40454f" /></svg>
              </Button>
              <div>
                <TabRow>
                  <Button $tone="light">ファイル</Button>
                  <Button>トラック</Button>
                  <Button>検索</Button>
                </TabRow>
                <TabRow>
                  <Button>マーカー</Button>
                  <Button>クリップボード</Button>
                </TabRow>
              </div>
              <div>
                <Button aria-label="閉じる"><Cross /></Button>
                <Button aria-label="追加"><Plus /></Button>
              </div>
            </BrowserTabs>

            <Browser>
              <PathBar>
                <PathInput aria-label="フォルダー" defaultValue="C:¥Program Files¥Waveform 8" />
                <Button aria-label="上へ"><svg width="12" height="11"><path d="M6 0L12 6H9V11H3V6H0Z" fill="#e6e8ec" /></svg></Button>
                <Button aria-label="フォルダーを開く"><svg width="12" height="12"><path d="M1 1H6L7 4H11V11H1Z" fill="none" stroke="#e6e8ec" strokeWidth="1.500" /></svg></Button>
              </PathBar>
              <FileList />
              <PreviewRow>
                <Button aria-label="試聴"><svg width="8" height="9"><path d="M0 0L8 4.500L0 9Z" fill="#8b8f99" /></svg></Button>
                <Button aria-label="オプション"><Bars /></Button>
                <FileStatus>ファイルが選択されていません</FileStatus>
                <Fader type="range" aria-label="試聴音量" $w={21} $h={34} $top={6} />
                <Well style={{ width: 21, height: 34 }} />
              </PreviewRow>
            </Browser>

            <MenuPanel>
              <MenuHead>
                MENU
                <svg width="11" height="11"><path d="M5.500 0V4" stroke="#e6e8ec" strokeWidth="3" /><path d="M1.500 3.500H9.500L5.500 7.500Z" fill="#e6e8ec" /><rect y="9" width="11" height="2" fill="#e6e8ec" /></svg>
              </MenuHead>
              <MenuGrid>
                {menuItems.map((m, i) =>
                  m.label ? (
                    <Button key={i} $tone={m.tone} $size={14} $left={m.arrow} style={m.label === "やり直す" ? { color: "#7ea2ee" } : undefined}>
                      {m.label}
                      {m.arrow && <Arrow />}
                    </Button>
                  ) : (
                    <span key={i} />
                  )
                )}
              </MenuGrid>
            </MenuPanel>
          </Column>

          <Column>
            <RulerRow>
              <ArrangeRuler />
              <RulerTools>
                <AddTrack aria-label="トラックを追加"><Plus size={12} thick={2} color="#f8dcdc" /></AddTrack>
                <AddPlugin aria-label="プラグインを追加"><Plus size={12} thick={2} color="#a9adb6" /></AddPlugin>
                <Automation aria-label="オートメーション">
                  <svg width="16" height="14"><path d="M4 0L8 8H0ZM8 6H16L12 14Z" fill="#fdf4df" /></svg>
                </Automation>
                <Toggles />
              </RulerTools>
            </RulerRow>

            <Arrange>
              <Tracks>
                <Row $h={38} $lane="#3c3f47">
                  <TrackHead $bg="#50545d">テンポ</TrackHead>
                  <Lane />
                  <TrackHead $bg="linear-gradient(#454950, #50545d)" />
                </Row>
                <Row $h={38} $lane="#3c3f47">
                  <TrackHead $bg="#50545d">マーカー</TrackHead>
                  <Lane />
                  <TrackHead $bg="#50545d" />
                </Row>
                <InsertLine />
                {tracks.map((t) => (
                  <TrackRow key={t.n} t={t} />
                ))}
                <Row $h={48} $lane="#202c38">
                  <TrackHead $bg="#2a3c4d" />
                  <Lane />
                  <Strip $bg="#465a6a" $edge="#2a3c4d"><div /></Strip>
                </Row>
                <ArrangeGrid />
              </Tracks>
              <VScroll>
                <ZoomKeys>
                  <button>+</button>
                  <button>Z</button>
                  <button>-</button>
                </ZoomKeys>
              </VScroll>
            </Arrange>
            <HScroll>
              <ZoomKeys $row>
                <button>+</button>
                <button>Z</button>
                <button>-</button>
                <button>F</button>
              </ZoomKeys>
            </HScroll>

            <Editor>
              <KeyColumn>
                <MiniRow>
                  <Button aria-label="閉じる"><Cross /></Button>
                  <Button aria-label="固定"><svg width="6" height="9"><path d="M1 0H5V1H4V4H6V6H4V9H2V6H0V4H2V1H1Z" fill="#eceef2" /></svg></Button>
                </MiniRow>
                <Piano>
                  <button aria-label="上へ"><svg width="10" height="6"><path d="M5 0L10 6H0Z" fill="#767a86" /></svg></button>
                  <PianoKeys />
                  <button aria-label="下へ"><svg width="9" height="6"><path d="M0 0H9L4.500 6Z" fill="#767a86" /></svg></button>
                </Piano>
              </KeyColumn>

              <RollColumn>
                <RollRuler>
                  <Layer>
                    {range(36).map((i) => {
                      const h = i % 4 === 0 ? rollLabel(i / 4 + 1).tick : 5;
                      return <rect key={i} x={Math.round((i * ROLL_BAR) / 4)} y={36 - h} width={i === 0 ? 1 : 2} height={h} fill={i % 4 === 0 ? "#8b8f99" : "#5a5f6b"} />;
                    })}
                  </Layer>
                  {range(9).map((i) => {
                    const l = rollLabel(i + 1);
                    return (
                      <BarLabel key={i} $size={l.size} $color={l.color} style={{ left: Math.round(i * ROLL_BAR), top: l.top }}>
                        {l.text}
                      </BarLabel>
                    );
                  })}
                </RollRuler>
                <PianoRoll />
                <RollTools>
                  <ToolButton $w={90}>ベロシティ</ToolButton>
                  <Joined>
                    <ToolButton $w={90}>コントローラ</ToolButton>
                    <ToolButton $w={18} aria-label="追加"><Plus thick={1} color="#c9ccd3" /></ToolButton>
                  </Joined>
                  <ToolSet>
                    <ToolButton $w={18} aria-label="選択"><svg width="8" height="12"><path d="M0 0L8 7H5L7 11L5 12L3 8L0 10Z" fill="#d5d7dc" /></svg></ToolButton>
                    <ToolButton $w={18} $tone="light" aria-label="鉛筆"><svg width="8" height="12"><path d="M6 0L8 1L3 10L1 12L1 9Z" fill="#3a3f4a" /></svg></ToolButton>
                    <ToolButton $w={18} aria-label="消しゴム"><svg width="12" height="11"><path d="M6 1L11 5L6 10H4L1 7Z" fill="none" stroke="#d5d7dc" /><path d="M6 1L11 5L8 8L3 4Z" fill="#d5d7dc" /></svg></ToolButton>
                    <ToolButton $w={18} aria-label="線"><svg width="12" height="10"><path d="M0 1L12 9" stroke="#d5d7dc" strokeWidth="1.300" /></svg></ToolButton>
                    <ToolButton $w={18} aria-label="ブラシ"><svg width="12" height="12"><path d="M11 0L12 1L7 8L5 6Z" fill="#d5d7dc" /><path d="M4 6L7 9C6 12 2 12 0 11C2 10 2 7 4 6Z" fill="#d5d7dc" /></svg></ToolButton>
                  </ToolSet>
                  <ToolButton $w={90} $left>クォンタイズ<Arrow size={7} /></ToolButton>
                  <ToolButton $w={90} $left>グルーヴ<Arrow size={7} /></ToolButton>
                  <ToolButton $w={90} $left>コード<Arrow size={7} /></ToolButton>
                </RollTools>
              </RollColumn>

              <ClipColumn>
                <ClipList>
                  <ClipItem>
                    新しいMIDIクリップ
                    <Lock w={7} h={10} />
                    <svg width="11" height="8" viewBox="0 0 11 8"><path d="M0 4C3 -1 8 -1 11 4C8 9 3 9 0 4Z" fill="#d5dbe8" /><circle cx="5.500" cy="4" r="2" fill="#23407a" /></svg>
                    <svg width="9" height="11" viewBox="0 0 9 11"><path d="M6 0L9 2L3 10L0 11L1 7Z" fill="#d5dbe8" /><path d="M6.500 2.500L2.500 8" stroke="#23407a" /></svg>
                  </ClipItem>
                </ClipList>
                <AudioBox>
                  <svg width="12" height="10"><path d="M.5 0V10M2.500 1V9M4.500 3V8M6.500 3V7M8.500 4V7M10.500 4V6M0 5H12" stroke="#d5d7dc" /></svg>
                  {"<バックグラウンドオーディ..."}
                </AudioBox>
              </ClipColumn>
            </Editor>

            <Bottom>
              <Props>
                <PropsTitle>
                  <Lock open w={10} h={16} />
                  MIDIクリップ - "新しいMIDIクリップ "
                </PropsTitle>
                <PropsBody>
                  <PropList>
                    <Button $size={14} $left>パターンスタイル: コード<Arrow /></Button>
                    <Button $size={14} $left>キー: Follow Global Track<Arrow /></Button>
                    <Value id="octave" label="オクターブ: 4" value={4} max={13} />
                    <Value id="velocity" label="速度スケール: 100.0" value={100} max={100} />
                    <Value id="gate" label="ゲート: 100.0" value={100} max={100} />
                    <PresetRow>
                      <Button $size={14} $left>コードプリセット:</Button>
                      <Button aria-label="プリセット一覧"><Bars w={13} /></Button>
                    </PresetRow>
                  </PropList>
                  <PropsRight>
                    <Progression>
                      <ProgLabel>プログレッション:</ProgLabel>
                      <ChordBoxes>
                        {["vi", "I", "V", "IV"].map((k) => (
                          <Button key={k} $size={14}>{k}</Button>
                        ))}
                      </ChordBoxes>
                      <ProgTools>
                        <Button aria-label="追加"><Plus size={10} thick={4} /></Button>
                        <Button aria-label="一覧"><Bars /></Button>
                      </ProgTools>
                      <Suggest>
                        {([["vi", 45], ["V", 6], ["I", 5], ["ii", 4], ["iii", 3]] as [string, number][]).map(([k, h]) => (
                          <SuggestItem key={k}>
                            <i style={{ height: h }} />
                            <span>{k}</span>
                          </SuggestItem>
                        ))}
                      </Suggest>
                    </Progression>
                    <Update $tone="red" $size={14}>パターン更新</Update>
                  </PropsRight>
                </PropsBody>
              </Props>

              <Transport>
                <Lcd>
                  <Tempo>
                    <span>BPM</span>
                    <span>92.64</span>
                    <span>4/4</span>
                    <span>C</span>
                  </Tempo>
                  <Clock>
                    <span>1,</span>
                    <span>1</span>
                    <span>,000</span>
                  </Clock>
                </Lcd>
                <Keys>
                  <Button $tone="green" aria-label="自動再生">
                    <svg width="20" height="11"><rect width="10" height="11" fill="#dff1ee" /><path d="M14 1L20 5.500L14 10Z" fill="#dff1ee" /><text x="5" y="9" fontSize="9" textAnchor="middle" fill="#1f8173">A</text></svg>
                  </Button>
                  <Button aria-label="自動録音">
                    <svg width="22" height="11"><rect width="10" height="11" fill="#cf3d40" /><circle cx="17.500" cy="5.500" r="4" fill="#cf3d40" /><text x="5" y="9" fontSize="9" textAnchor="middle" fill="#3b404c">A</text></svg>
                  </Button>
                  <Button aria-label="再生"><svg width="10" height="10"><path d="M0 0L10 5L0 10Z" fill="#1f9b8a" /></svg></Button>
                  <Button aria-label="録音"><svg width="11" height="11"><circle cx="5.500" cy="5.500" r="5" fill="#d63f42" /></svg></Button>
                  <Button aria-label="警告"><svg width="12" height="11"><path d="M6 0L12 11H0Z" fill="#edb33d" /><path d="M6 3.500V7.500M6 8.500V10" stroke="#3b404c" strokeWidth="1.500" /></svg></Button>
                  <Button aria-label="先頭へ"><svg width="22" height="11"><path d="M1 0V11" stroke="#eceef2" strokeWidth="2" /><path d="M11 0V11L2 5.500ZM21 0V11L11 5.500Z" fill="#eceef2" /></svg></Button>
                  <Button aria-label="巻き戻し"><svg width="20" height="11"><path d="M10 0V11L0 5.500ZM20 0V11L10 5.500Z" fill="#eceef2" /></svg></Button>
                  <Button aria-label="早送り"><svg width="20" height="11"><path d="M0 0V11L10 5.500ZM10 0V11L20 5.500Z" fill="#eceef2" /></svg></Button>
                </Keys>
                <MasterArea>
                  <MasterDrop>(マスタープラグインを、ここにドロップ )</MasterDrop>
                  <MasterMeter />
                  <ModeGrid>
                    <Button $size={14}>ループ</Button>
                    <Button $size={14} $tone="light">クリック</Button>
                    <Button $size={14}>自動ロック</Button>
                    <Button $size={14}>パンチイン</Button>
                    <Button $size={14} $tone="light">スナップ</Button>
                    <Button $size={14} $tone="light">スクロール</Button>
                    <Button $size={14}>MIDI学習</Button>
                    <Button $size={14}>MTC</Button>
                  </ModeGrid>
                  <MasterFaders>
                    <PanBox>
                      <Pan type="range" aria-label="マスターパン" $w={81} $h={20} $bar={16} />
                      <span>L</span>
                      <span>R</span>
                    </PanBox>
                    <Fader type="range" aria-label="マスター音量" $w={81} $h={79} $top={25} />
                  </MasterFaders>
                </MasterArea>
              </Transport>
            </Bottom>
          </Column>
        </Main>

        <ContextMenu role="menu">
          <ContextItem role="menuitem">プリセット<Arrow /></ContextItem>
          <ContextItem role="menuitem">人気のある3つのコード進行<Arrow /></ContextItem>
          <ContextItem role="menuitem" $on>人気のある4つのコード進行<Arrow /></ContextItem>
          <hr />
          <ContextItem role="menuitem">クリア</ContextItem>
        </ContextMenu>
        <ChordMenu role="menu">
          {progressions.map((p, i) => (
            <ChordItem key={i} role="menuitem" $on={i === 61}>{p}</ChordItem>
          ))}
        </ChordMenu>
        <Pointer width="13" height="20" viewBox="0 0 13 20">
          <path d="M1 1V16L4.500 13L7 18.500L9.500 17.500L7.200 12H12Z" fill="#fff" stroke="#111" />
        </Pointer>
      </Window>
    </>
  );
}
